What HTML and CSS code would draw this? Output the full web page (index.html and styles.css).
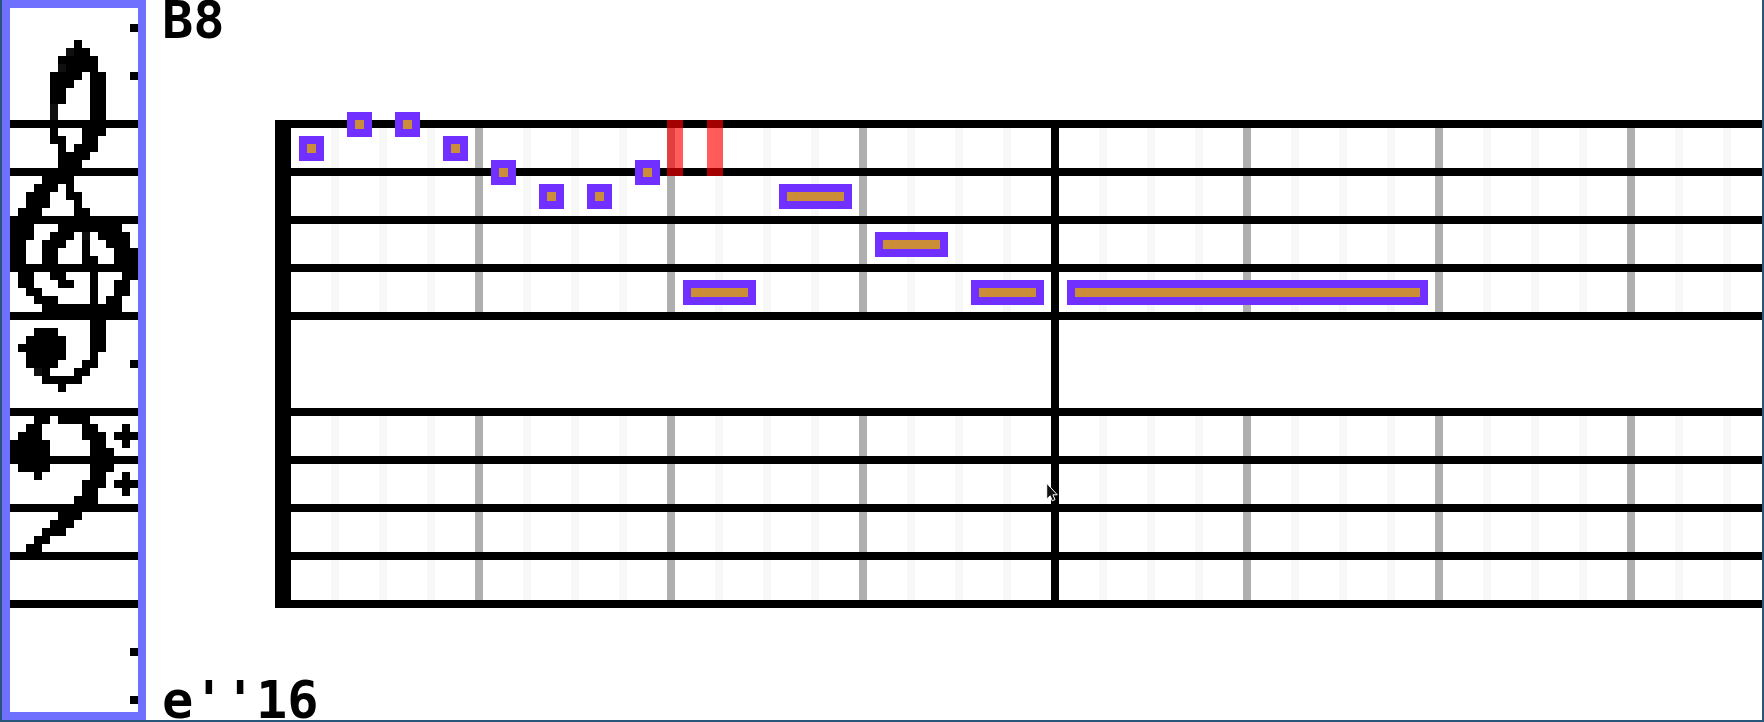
FILE: index.html
```html
<!DOCTYPE html>
<html lang="en">
<head>
<meta charset="utf-8">
<title>Score editor</title>
<link rel="stylesheet" href="styles.css">
</head>
<body>
<div class="window">
  <aside class="clefs">
    <svg class="clef-art" viewBox="0 0 16 88" role="img" aria-label="Treble and bass clef" shape-rendering="crispEdges">
      <g class="pixels" transform="translate(0 .5)">
        <!-- staff lines -->
        <path d="M0 14h16M0 20h16M0 26h16M0 32h16M0 38h16M0 50h16M0 56h16M0 62h16M0 68h16M0 74h16"/>
        <!-- octave ticks -->
        <path d="M15 2h1M15 8h1M15 44h1M15 80h1M15 86h1"/>
        <!-- treble clef -->
        <path d="M8 4h1M7 5h3M6 6h5M6 7h5M5 8h4M10 8h2M5 9h3M10 9h2M5 10h2M10 10h2M5 11h2M10 11h2M5 12h1M10 12h2M5 13h1M10 13h2M5 15h1M9 15h3M5 16h2M9 16h2M6 17h1M8 17h3M6 18h4M6 19h3M4 21h4M3 22h3M7 22h1M2 23h3M7 23h2M2 24h3M8 24h1M1 25h3M8 25h2M0 27h3M6 27h8M0 28h3M5 28h3M9 28h1M11 28h4M0 29h2M4 29h3M9 29h1M12 29h3M0 30h2M4 30h2M9 30h1M13 30h3M0 31h2M4 31h2M9 31h2M13 31h3M1 33h2M5 33h2M10 33h1M14 33h2M1 34h2M6 34h2M10 34h1M13 34h2M2 35h2M10 35h1M13 35h2M3 36h3M10 36h1M12 36h2M4 37h10M10 39h2M3 40h3M10 40h2M2 41h5M10 41h2M1 42h6M10 42h2M2 43h5M10 43h1M2 44h4M9 44h2M3 45h2M8 45h2M4 46h5M6 47h1"/>
        <!-- bass clef -->
        <path d="M3 51h2M6 51h4M2 52h2M9 52h2M14 52h1M1 53h3M9 53h3M13 53h3M0 54h5M10 54h2M14 54h1M0 55h5M10 55h3M0 56h1M1 57h4M10 57h3M3 58h1M10 58h2M14 58h1M9 59h3M13 59h3M9 60h2M14 60h1M8 61h3M6 63h3M5 64h3M4 65h3M3 66h2M2 67h2"/>
        <path class="worn" d="M7 5h1M6 7h1M5 12h1M5 13h1M9 28h1M3 45h1"/>
      </g>
    </svg>
  </aside>
  <main class="score">
    <div class="readout">B8</div>
    <section class="system" aria-label="Grand staff">
      <div class="staff"></div>
      <div class="staff"></div>
      <div class="barline"></div>
      <div class="note" style="--beat:0;--step:0"></div>
      <div class="note" style="--beat:1;--step:-1"></div>
      <div class="note" style="--beat:2;--step:-1"></div>
      <div class="note" style="--beat:3;--step:0"></div>
      <div class="note" style="--beat:4;--step:1"></div>
      <div class="note" style="--beat:5;--step:2"></div>
      <div class="note" style="--beat:6;--step:2"></div>
      <div class="note" style="--beat:7;--step:1"></div>
      <div class="note" style="--beat:8;--step:6;--hold:1"></div>
      <div class="note" style="--beat:10;--step:2;--hold:1"></div>
      <div class="note" style="--beat:12;--step:4;--hold:1"></div>
      <div class="note" style="--beat:14;--step:6;--hold:1"></div>
      <div class="note" style="--beat:16;--step:6;--hold:7"></div>
      <div class="playhead"></div>
      <svg class="pointer" viewBox="0 0 12 20" aria-hidden="true">
        <path d="M.7 1.2V17L4.2 13.8L6.3 18.8L9 17.6L6.9 12.8H11.3Z"/>
      </svg>
    </section>
    <div class="readout readout-bottom">e''16</div>
  </main>
</div>
</body>
</html>
```

FILE: styles.css
```css
:root {
  --px: 8px;
  --beat-width: 48px;
  --ink: #000;
}

* {
  box-sizing: border-box;
}

body {
  margin: 0;
  background: #fff;
}

.window {
  display: flex;
  min-height: 100vh;
  border: 2px solid #28567a;
  border-top: 0;
}

.clefs {
  flex: none;
  border: var(--px) solid #7070ff;
}

.clef-art {
  display: block;
  width: calc(16 * var(--px));
}

.pixels {
  fill: none;
  stroke: var(--ink);
  stroke-width: 1;
}

.worn {
  stroke: #101010;
}

.score {
  display: flex;
  flex: 1;
  flex-direction: column;
  min-width: 0;
  padding-left: 16px;
}

.readout {
  color: var(--ink);
  font: bold 52px/40px "DejaVu Sans Mono", monospace;
}

.readout-bottom {
  margin-top: auto;
}

.system {
  position: relative;
  display: flex;
  flex-direction: column;
  gap: 88px;
  margin: 80px 0 0 113px;
  border-left: 16px solid var(--ink);
}

/* Five lines over faint beat marks, with a stronger mark each fourth beat. */
.staff {
  height: 200px;
  background:
    repeating-linear-gradient(to bottom, var(--ink) 0 8px, transparent 8px 48px),
    repeating-linear-gradient(to right, transparent 0 184px, #afafaf 184px 192px),
    repeating-linear-gradient(to right, transparent 0 40px, #f8f8f8 40px 48px);
}

.barline {
  position: absolute;
  top: 0;
  bottom: 0;
  left: 760px;
  width: var(--px);
  background: var(--ink);
}

.note {
  position: absolute;
  top: calc(16px + var(--step) * 24px);
  left: calc(8px + var(--beat) * var(--beat-width));
  width: calc(25px + var(--hold, 0) * var(--beat-width));
  height: 25px;
  border: var(--px) solid #7030ff;
  background: #cb8d38;
}

.playhead {
  position: absolute;
  top: 0;
  left: 376px;
  width: 56px;
  height: 56px;
  border: solid rgba(255, 0, 0, 0.64);
  border-width: 0 16px;
}

.pointer {
  position: absolute;
  top: 362px;
  left: 755px;
  width: 12px;
  height: 20px;
  fill: #111;
  stroke: #fff;
  stroke-width: 1;
}
```
